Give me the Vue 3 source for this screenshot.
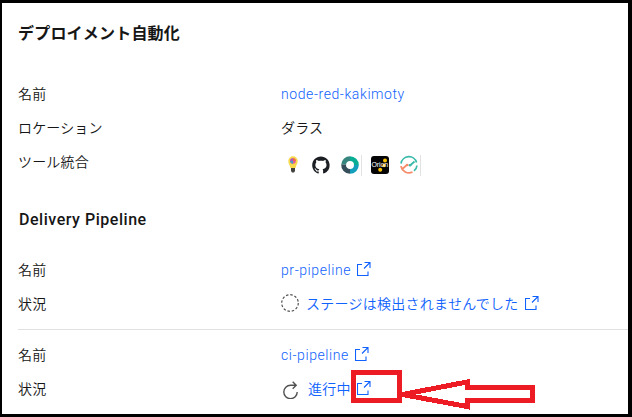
<script setup>
const stages = [
  { name: 'pr-pipeline', status: 'ステージは検出されませんでした', state: 'empty' },
  { name: 'ci-pipeline', status: '進行中', state: 'running' },
]
</script>

<template>
  <main class="panel">
    <h2 class="title">デプロイメント自動化</h2>
    <dl class="rows">
      <div class="row"><dt>名前</dt><dd><a class="latin">node-red-kakimoty</a></dd></div>
      <div class="row"><dt>ロケーション</dt><dd>ダラス</dd></div>
      <div class="row">
        <dt>ツール統合</dt>
        <dd class="tools">
          <svg class="tool bulb" viewBox="0 0 24 24">
            <path d="M9.500 15C9 12 7.300 11 7.300 8a4.700 4.700 0 0 1 9.400 0c0 3-1.700 4-2.200 7z" fill="#f8d94b" />
            <circle cx="12" cy="8" r="2.800" fill="#e45c9c" />
            <path d="M12 8V5.200a2.800 2.800 0 0 1 2.800 2.800z" fill="#ef6d45" />
            <path d="M12 8H9.200a2.800 2.800 0 0 1 2.800-2.800z" fill="#a45bc4" />
            <path d="M12 8v2.800a2.800 2.800 0 0 1-2.800-2.800z" fill="#4a9fc4" />
            <path d="M10 15h4v3l-1 1.500h-2l-1-1.500z" fill="#42433f" />
          </svg>
          <svg class="tool" viewBox="0 0 24 24">
            <path transform="translate(3.200 3.500) scale(1.090)" fill="#1b1f23" d="M8 0C3.580 0 0 3.580 0 8c0 3.540 2.290 6.530 5.470 7.590.4.070.550-.170.550-.380 0-.190-.010-.820-.010-1.490-2.010.370-2.530-.490-2.690-.940-.090-.230-.480-.940-.820-1.130-.280-.150-.680-.520-.010-.530.630-.010 1.080.580 1.230.820.720 1.210 1.870.870 2.330.660.070-.520.280-.870.510-1.070-1.780-.200-3.640-.890-3.640-3.950 0-.870.310-1.590.820-2.150-.080-.200-.360-1.020.080-2.120 0 0 .670-.210 2.200.820.640-.180 1.320-.270 2-.270s1.360.090 2 .270c1.530-1.040 2.200-.820 2.200-.820.440 1.100.160 1.920.080 2.120.510.560.820 1.270.820 2.150 0 3.070-1.870 3.750-3.650 3.950.290.250.540.730.540 1.480 0 1.070-.010 1.930-.010 2.200 0 .210.150.460.550.380A8.010 8.010 0 0 0 16 8c0-4.420-3.580-8-8-8z" />
          </svg>
          <svg class="tool" viewBox="0 0 24 24">
            <g fill="none" stroke-width="4.800">
              <path d="M5.700 11.500A6.400 6.400 0 0 1 12 5.600" stroke="#36867f" />
              <path d="M12 5.600A6.400 6.400 0 0 1 18.400 12" stroke="#08ad94" />
              <path d="M18.400 12A6.400 6.400 0 0 1 12 18.400" stroke="#139fbc" />
              <path d="M12 18.400A6.400 6.400 0 0 1 5.600 11.500" stroke="#354e59" />
            </g>
            <path d="M23.500 2v21" stroke="#e2e2e2" />
          </svg>
          <svg class="tool" viewBox="0 0 24 24">
            <rect x="3" y="3" width="18" height="18" rx="3" fill="#050505" />
            <g fill="#ffc400"><circle cx="17" cy="7.500" r="2" /><circle cx="16" cy="12.500" r="1.700" /><circle cx="12.200" cy="16.700" r="2" /></g>
            <text class="orion" x="3.500" y="14">Orion</text>
          </svg>
          <svg class="tool" viewBox="0 0 24 24">
            <g fill="none" stroke-width="1.700">
              <path d="M4 10.500a8 8 0 0 1 15.600-1M20 12.500a8 8 0 0 1-3 5.400M13 12.500l4.500-4" stroke="#38b9a9" />
              <path d="M4 13a8 8 0 0 0 11.500 6M4.800 16.500l5.500-5" stroke="#f58b68" />
            </g>
            <circle cx="13" cy="12.200" r="1.300" fill="#38b9a9" />
            <circle cx="10.300" cy="12" r="1.300" fill="#f58b68" />
            <path d="M23.500 2v21" stroke="#e2e2e2" />
          </svg>
        </dd>
      </div>
    </dl>

    <h3 class="subtitle">Delivery Pipeline</h3>
    <dl v-for="stage in stages" :key="stage.name" class="rows stage">
      <div class="row">
        <dt>名前</dt>
        <dd>
          <a class="latin">{{ stage.name }}</a>
          <svg class="launch" viewBox="0 0 14 14"><path d="M5 2.500H.5v11h10.500v-4M7.500.5h5.500v5.500M13 .5l-6 6" /></svg>
        </dd>
      </div>
      <div class="row">
        <dt>状況</dt>
        <dd>
          <svg v-if="stage.state === 'empty'" class="state" viewBox="0 0 18 18"><circle cx="9" cy="9" r="8.300" stroke-dasharray="2.500 1.845" /></svg>
          <svg v-else class="state running" viewBox="0 0 18 18"><path d="M14 4.300H8.500a6.700 6.700 0 1 0 6.700 6.700M10.700.8l3.500 3.500-3.500 3.500" /></svg>
          <a class="status">{{ stage.status }}</a>
          <span class="target">
            <svg class="launch" viewBox="0 0 14 14"><path d="M5 2.500H.5v11h10.500v-4M7.500.5h5.500v5.500M13 .5l-6 6" /></svg>
            <svg v-if="stage.state === 'running'" class="callout" viewBox="0 0 186 42">
              <rect x="2.500" y="2.500" width="46" height="28" />
              <path d="M51.500 24.500L116 12v5.500h65v13h-65v6z" />
            </svg>
          </span>
        </dd>
      </div>
    </dl>
  </main>
</template>

<style>
body { margin: 0; background: #fff; }
</style>

<style scoped>
.panel {
  box-sizing: border-box;
  width: 632px;
  height: 417px;
  overflow: hidden;
  padding: 12px 0 0 16px;
  border: solid #000;
  border-width: 3px 4px 3px 2px;
  background: #fff;
  color: #161616;
  font: 350 14px/34px "Noto Sans CJK JP", sans-serif;
  letter-spacing: .16px;
}
.title, .subtitle { margin: 0; height: 34px; line-height: 34px; font-size: 16px; }
.title { font-weight: 700; letter-spacing: .2px; }
.subtitle { margin-top: 25px; padding-left: 1px; font-family: Roboto, sans-serif; font-weight: 500; letter-spacing: .53px; }
.rows { margin: 27px 0 0; }
.stage { margin-top: 15px; }
.stage + .stage { margin-top: 9px; padding-top: 7px; border-top: 1px solid #e0e0e0; }
.row { display: grid; grid-template-columns: 263px 1fr; height: 34px; }
dt, dd { margin: 0; }
dd { display: flex; align-items: center; white-space: nowrap; }
a { color: #0f62fe; }
.latin { padding-top: 1px; font-family: Roboto, sans-serif; font-weight: 300; letter-spacing: .58px; }
.status { letter-spacing: .26px; }
svg { flex: none; }
.tools { gap: 5.500px; padding-top: 8px; }
.tool { width: 24px; height: 24px; }
.bulb { margin: 0 -1.500px 0 -.5px; }
.orion { font: 7px "Liberation Sans", sans-serif; fill: #fff; letter-spacing: -.1px; }
.launch { display: block; width: 14px; height: 14px; margin: -1px 0 0 6px; fill: none; stroke: #0f62fe; stroke-width: 1.100; }
.state { width: 18px; height: 18px; margin-right: 7px; fill: none; stroke: #525252; stroke-width: 1.200; }
.running { margin: 3px 8px 0 1px; stroke-width: 1.400; }
.target { position: relative; }
.callout { position: absolute; left: 0; top: -12px; width: 186px; height: 42px; fill: none; stroke: #ed1c24; stroke-width: 5; shape-rendering: crispEdges; }
</style>
